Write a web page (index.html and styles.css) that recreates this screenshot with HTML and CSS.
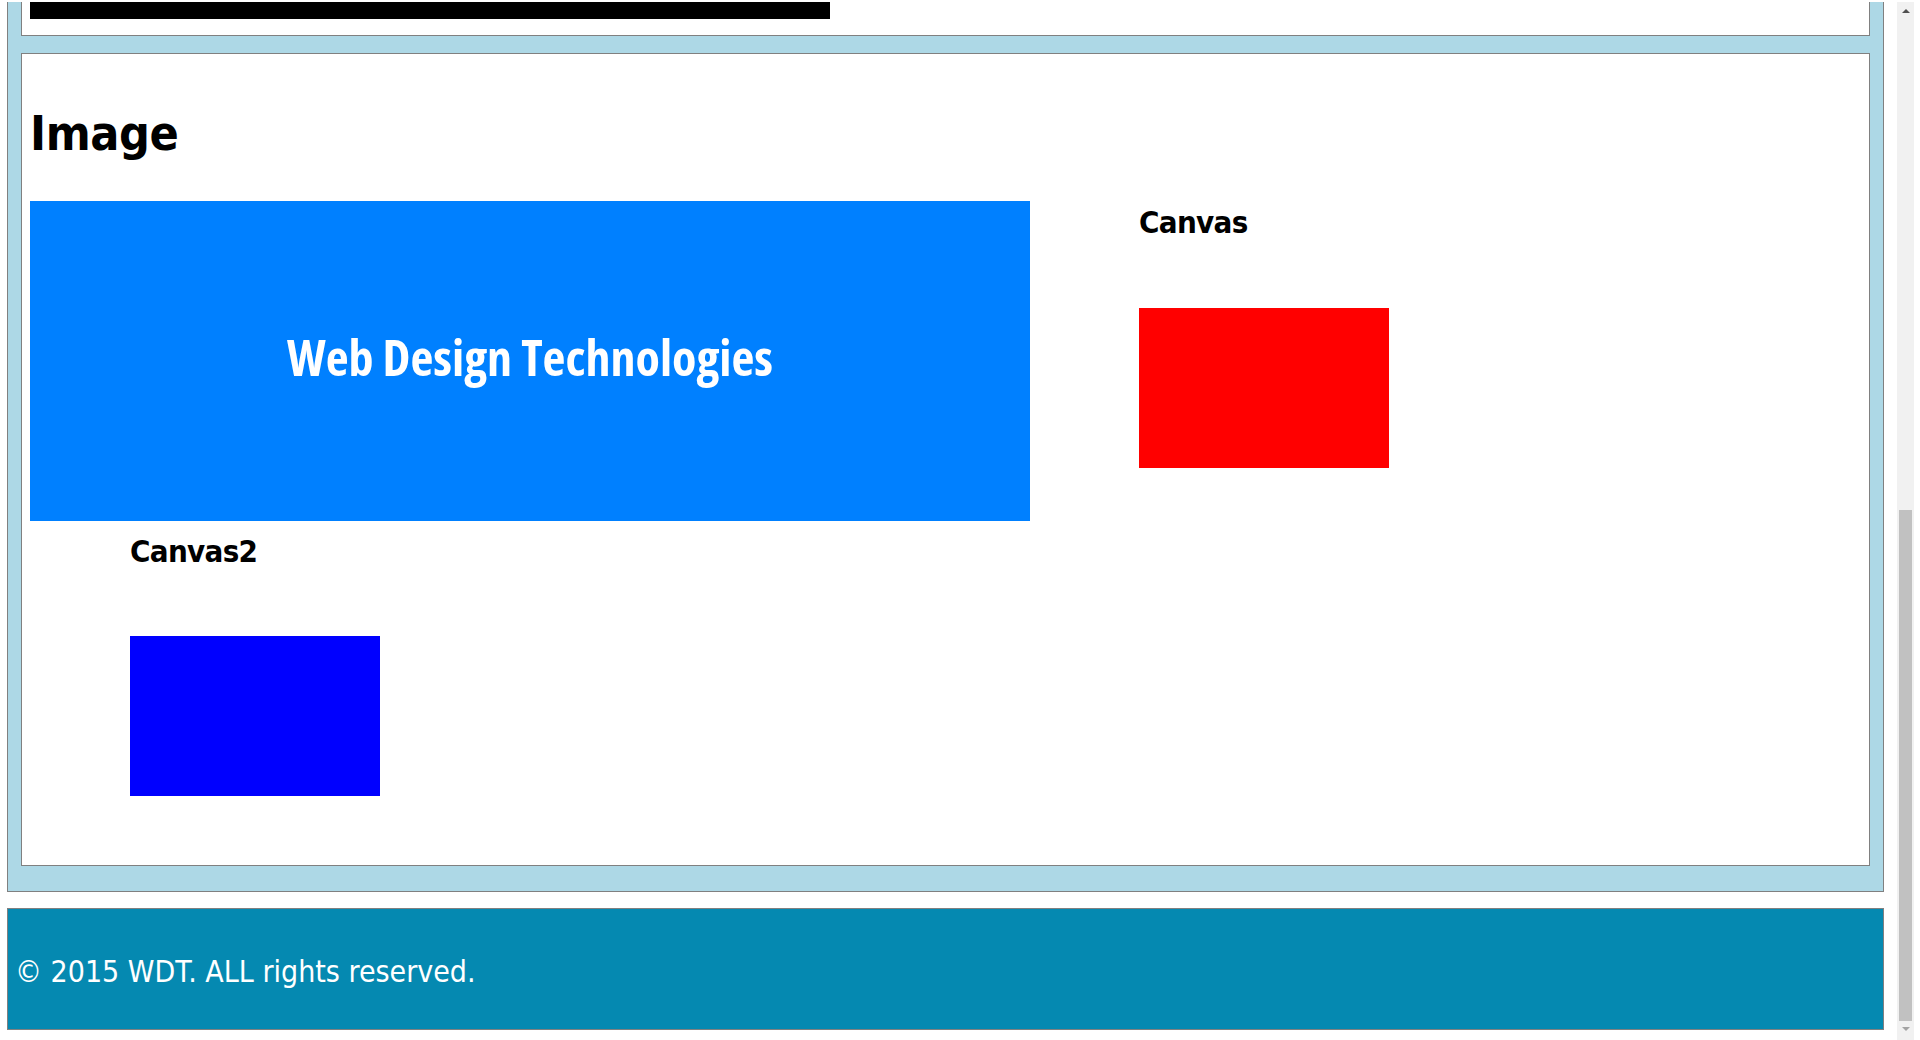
FILE: index.html
```html
<!DOCTYPE html>
<html lang="en">
<head>
<meta charset="utf-8">
<title>WDT</title>
<link rel="stylesheet" href="styles.css">
</head>
<body>
<div class="viewport">
  <div class="page">
    <div class="wrap">
      <section class="box box-top">
        <div class="bar"></div>
      </section>
      <section class="box box-media">
        <h1 class="title">Image</h1>
        <div class="row row-first">
          <div class="banner"><span class="banner-text">Web Design Technologies</span></div>
          <div class="canvas-block canvas-block-first">
            <h2 class="canvas-title">Canvas</h2>
            <div class="canvas canvas-red"></div>
          </div>
        </div>
        <div class="row row-second">
          <div class="canvas-block canvas-block-second">
            <h2 class="canvas-title">Canvas2</h2>
            <div class="canvas canvas-blue"></div>
          </div>
        </div>
      </section>
    </div>
    <footer class="footer">© 2015 WDT. ALL rights reserved.</footer>
  </div>
  <div class="scrollbar">
    <div class="sb-btn sb-up"><span class="arrow-up"></span></div>
    <div class="sb-track"><div class="sb-thumb"></div></div>
    <div class="sb-btn sb-down"><span class="arrow-down"></span></div>
  </div>
</div>
</body>
</html>
```
FILE: styles.css
```css
html, body {
  margin: 0;
  padding: 0;
  height: 1040px;
  overflow: hidden;
  background: #ffffff;
}

body {
  font-family: "DejaVu Sans Condensed", "DejaVu Sans", sans-serif;
  font-stretch: condensed;
  color: #000000;
}

.viewport {
  display: flex;
  align-items: flex-start;
  padding-top: 2px;
  height: 1038px;
}

.page {
  width: 1877px;
  margin-left: 7px;
  margin-right: 13px;
  flex: none;
}

.wrap {
  background: #add8e6;
  border: 1px solid #808080;
  border-top: none;
  padding: 0 13px 25px;
}

.box {
  background: #ffffff;
  border: 1px solid #808080;
  padding: 0 8px;
}

.box-top {
  border-top: none;
  padding-bottom: 16px;
}

.bar {
  width: 800px;
  height: 17px;
  background: #000000;
}

.box-media {
  margin-top: 17px;
  padding-bottom: 69px;
}

.title {
  margin: 51px 0 40px;
  font-size: 48px;
  line-height: 56px;
  font-weight: bold;
  letter-spacing: -0.4px;
}

.row {
  display: flex;
  align-items: flex-start;
}

.row-second {
  margin-top: 11px;
}

.banner {
  width: 1000px;
  height: 320px;
  background: #0080ff;
  display: flex;
  align-items: center;
  justify-content: center;
  flex: none;
}

.banner-text {
  font-family: "Open Sans", "DejaVu Sans Condensed", sans-serif;
  font-weight: 700;
  font-stretch: 75%;
  font-size: 50px;
  line-height: 50px;
  color: #ffffff;
  padding-bottom: 8px;
}

.canvas-block-first {
  margin-left: 109px;
  padding-top: 2px;
}

.canvas-block-second {
  margin-left: 100px;
}

.canvas-title {
  margin: 0;
  font-size: 31px;
  line-height: 38px;
  font-weight: bold;
  letter-spacing: -0.7px;
}

.canvas {
  width: 250px;
  height: 160px;
}

.canvas-red {
  background: #ff0000;
  margin-top: 67px;
}

.canvas-blue {
  background: #0000ff;
  margin-top: 66px;
}

.footer {
  margin-top: 16px;
  background: #0589b1;
  border: 1px solid #808080;
  color: #ffffff;
  font-size: 30px;
  line-height: 35px;
  padding: 45px 7px 40px;
}

.scrollbar {
  width: 17px;
  height: 1038px;
  background: #f1f1f1;
  display: flex;
  flex-direction: column;
  flex: none;
}

.sb-btn {
  height: 17px;
  display: flex;
  justify-content: center;
  align-items: center;
  flex: none;
}

.sb-down {
  height: 19px;
  align-items: flex-start;
  padding-top: 6px;
  box-sizing: border-box;
}

.arrow-up {
  width: 0;
  height: 0;
  border-left: 4px solid transparent;
  border-right: 4px solid transparent;
  border-bottom: 4px solid #505050;
}

.arrow-down {
  width: 0;
  height: 0;
  border-left: 4px solid transparent;
  border-right: 4px solid transparent;
  border-top: 4px solid #a3a3a3;
}

.sb-track {
  flex: 1;
  display: flex;
  flex-direction: column;
}

.sb-thumb {
  margin-top: auto;
  margin-left: 2px;
  width: 13px;
  height: 511px;
  background: #c1c1c1;
}
```
